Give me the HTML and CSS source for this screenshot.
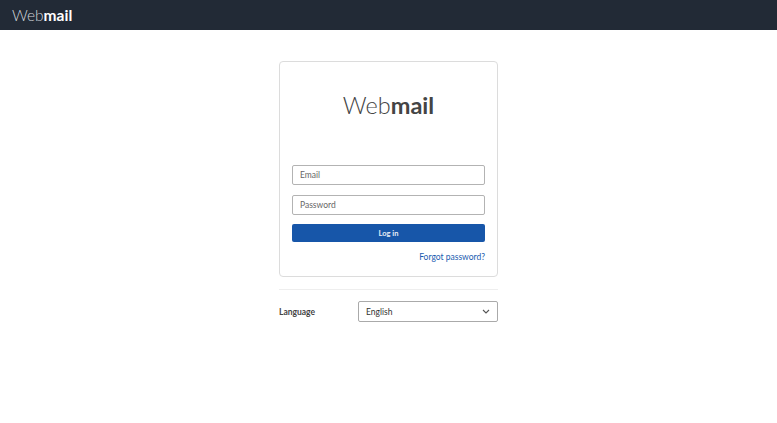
FILE: index.html
```html
<!DOCTYPE html>
<html>
<head>
<meta charset="utf-8">
<link rel="stylesheet" href="styles.css">
</head>
<body>
<header class="topbar"><span class="brand">Web<b>mail</b></span></header>
<main class="page">
  <div class="wrap">
    <div class="card">
      <h1 class="logo">Web<b>mail</b></h1>
      <form class="form">
        <input class="field field-email" type="text" placeholder="Email">
        <input class="field" type="password" placeholder="Password">
        <button class="btn" type="button">Log in</button>
        <a class="forgot" href="#">Forgot password?</a>
      </form>
    </div>
    <hr class="sep">
    <div class="lang">
      <span class="lang-label">Language</span>
      <div class="select">
        <span>English</span>
        <svg width="8" height="5" viewBox="0 0 8 5"><path d="M1 1l3 3 3-3" fill="none" stroke="#555" stroke-width="1.1"/></svg>
      </div>
    </div>
  </div>
</main>
</body>
</html>
```
FILE: styles.css
```css
* { box-sizing: border-box; }
html, body { margin: 0; padding: 0; background: #fff; }
body { font-family: Lato, "Open Sans", sans-serif; color: #333; }
.topbar {
  height: 30px;
  background: #222a36;
  display: flex;
  align-items: center;
  padding-left: 12px;
}
.brand { color: #d0d4da; font-size: 15.5px; font-weight: 300; }
.brand b { color: #fff; font-weight: 700; }
.page { display: flex; justify-content: center; padding-top: 31px; }
.wrap { width: 219px; }
.card {
  border: 1px solid #dcdcdc;
  border-radius: 4px;
  padding: 0 12px 12px;
  height: 216px;
}
.logo {
  margin: 28px 0 0;
  text-align: center;
  font-size: 23.5px;
  font-weight: 300;
  color: #444;
  line-height: 30px;
}
.logo b { font-weight: 700; }
.form { display: flex; flex-direction: column; margin-top: 45px; }
.field {
  height: 20px;
  border: 1px solid #b3b3b3;
  border-radius: 2px;
  font-family: inherit;
  font-size: 8.5px;
  padding: 0 7px;
  margin-bottom: 9px;
  color: #333;
  outline: none;
}
.field-email { margin-bottom: 10px; }
.field::placeholder { color: #666; }
.btn {
  height: 18px;
  background: #1756a9;
  border: none;
  border-radius: 2px;
  color: #e8eef7;
  font-family: inherit;
  font-size: 7.5px;
  font-weight: 700;
  padding: 0;
}
.forgot {
  align-self: flex-end;
  margin-top: 10px;
  font-size: 8.5px;
  color: #1a5cb0;
  text-decoration: none;
}
.sep { border: none; border-top: 1px solid #eee; margin: 12px 0 0; }
.lang { display: flex; align-items: center; justify-content: space-between; margin-top: 11px; }
.lang-label { font-size: 8.5px; font-weight: 700; color: #444; }
.select {
  width: 140px;
  height: 21px;
  border: 1px solid #aaa;
  border-radius: 2px;
  display: flex;
  align-items: center;
  justify-content: space-between;
  padding: 0 7px;
  font-size: 8.5px;
  color: #333;
}
```
